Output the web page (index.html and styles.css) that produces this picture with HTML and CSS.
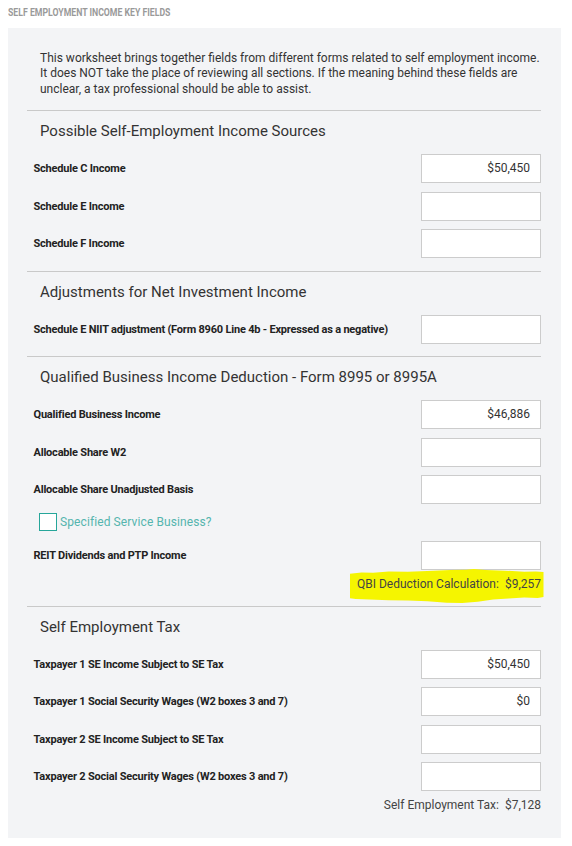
FILE: index.html
```html
<!DOCTYPE html>
<html lang="en">
<head>
<meta charset="utf-8">
<title>Self Employment Income Key Fields</title>
<link rel="stylesheet" href="styles.css">
</head>
<body>
<div class="page">
  <h1 class="page-title"><span>SELF EMPLOYMENT INCOME KEY FIELDS</span></h1>
  <div class="panel">
    <p class="intro">This worksheet brings together fields from different forms related to self employment income.<br>It does NOT take the place of reviewing all sections. If the meaning behind these fields are<br>unclear, a tax professional should be able to assist.</p>

    <section class="group">
      <h2 class="group-title">Possible Self-Employment Income Sources</h2>
      <div class="rows">
        <div class="row"><span class="label">Schedule C Income</span><div class="field">$50,450</div></div>
        <div class="row"><span class="label">Schedule E Income</span><div class="field"></div></div>
        <div class="row"><span class="label">Schedule F Income</span><div class="field"></div></div>
      </div>
    </section>

    <section class="group">
      <h2 class="group-title">Adjustments for Net Investment Income</h2>
      <div class="rows">
        <div class="row"><span class="label">Schedule E NIIT adjustment (Form 8960 Line 4b - Expressed as a negative)</span><div class="field"></div></div>
      </div>
    </section>

    <section class="group">
      <h2 class="group-title">Qualified Business Income Deduction - Form 8995 or 8995A</h2>
      <div class="rows">
        <div class="row"><span class="label">Qualified Business Income</span><div class="field">$46,886</div></div>
        <div class="row"><span class="label">Allocable Share W2</span><div class="field"></div></div>
        <div class="row"><span class="label">Allocable Share Unadjusted Basis</span><div class="field"></div></div>
        <label class="check-row"><span class="checkbox"></span><span class="check-label">Specified Service Business?</span></label>
        <div class="row"><span class="label">REIT Dividends and PTP Income</span><div class="field"></div></div>
      </div>
      <div class="summary"><span class="highlight">QBI Deduction Calculation:<span class="amount">$9,257</span></span></div>
    </section>

    <section class="group last">
      <h2 class="group-title">Self Employment Tax</h2>
      <div class="rows">
        <div class="row"><span class="label">Taxpayer 1 SE Income Subject to SE Tax</span><div class="field">$50,450</div></div>
        <div class="row"><span class="label">Taxpayer 1 Social Security Wages (W2 boxes 3 and 7)</span><div class="field">$0</div></div>
        <div class="row"><span class="label">Taxpayer 2 SE Income Subject to SE Tax</span><div class="field"></div></div>
        <div class="row"><span class="label">Taxpayer 2 Social Security Wages (W2 boxes 3 and 7)</span><div class="field"></div></div>
      </div>
      <div class="summary"><span>Self Employment Tax:<span class="amount">$7,128</span></span></div>
    </section>
  </div>
</div>
</body>
</html>
```

FILE: styles.css
```css
* { box-sizing: border-box; }

html, body {
  margin: 0;
  padding: 0;
  background: #ffffff;
}

body {
  font-family: Roboto, "Liberation Sans", Arial, sans-serif;
  color: #333333;
}

.page {
  padding: 0 8px;
}

.page-title {
  margin: 0 0 9px 0;
  padding-top: 6px;
  font-size: 10px;
  line-height: 13px;
  font-weight: 700;
  color: #9a9a9a;
  white-space: nowrap;
}

.page-title span {
  display: inline-block;
  transform: scaleX(0.87);
  transform-origin: left center;
}

.panel {
  width: 553px;
  background: #f3f4f6;
  padding: 22.5px 20px 23.5px 19px;
}

.intro {
  margin: 0 0 13px 0;
  padding: 0 0 0 13px;
  font-size: 12px;
  line-height: 15.5px;
  color: #333333;
  white-space: nowrap;
}

.group {
  border-top: 1px solid #c9c9c9;
  padding-bottom: 12.5px;
}

.group.last {
  padding-bottom: 0;
}

.group-title {
  margin: 10px 0 13px 0;
  padding-left: 13px;
  font-size: 15px;
  line-height: 20px;
  font-weight: 400;
  color: #333333;
}

.rows {
  display: flex;
  flex-direction: column;
  gap: 8.5px;
}

.row {
  display: flex;
  align-items: center;
  justify-content: space-between;
  padding-left: 6.5px;
  height: 29px;
}

.label {
  font-size: 11px;
  font-weight: 700;
  letter-spacing: -0.2px;
  color: #222222;
}

.field {
  width: 120px;
  height: 29px;
  background: #ffffff;
  border: 1px solid #cccccc;
  text-align: right;
  padding-right: 10px;
  font-size: 12px;
  line-height: 27px;
  color: #333333;
}

.check-row {
  display: flex;
  align-items: center;
  height: 20px;
  padding-left: 12px;
  margin-top: -1px;
  margin-bottom: 1px;
}

.checkbox {
  width: 18px;
  height: 18px;
  border: 1.5px solid #26a69a;
  background: #ffffff;
  margin-right: 3px;
}

.check-label {
  font-size: 12px;
  letter-spacing: 0.1px;
  color: #55b5ae;
}

.summary {
  margin-top: 5px;
  display: flex;
  justify-content: flex-end;
  font-size: 12px;
  line-height: 18px;
  color: #444444;
}

.amount {
  margin-left: 6px;
}

.highlight {
  position: relative;
  z-index: 0;
}

.highlight::before {
  content: "";
  position: absolute;
  z-index: -1;
  left: -7px;
  right: -2.5px;
  top: -6px;
  bottom: -10px;
  background: #f5f500;
  clip-path: polygon(
    0% 14%, 6% 10%, 12% 11%, 20% 7%, 30% 8%, 40% 6%, 52% 3%, 60% 2%, 64% 0%,
    70% 3%, 80% 5%, 90% 8%, 96% 7%, 100% 9%,
    100% 82%, 97% 85%, 90% 84%, 82% 87%, 74% 90%, 66% 96%, 58% 100%,
    50% 99%, 40% 95%, 30% 93%, 20% 92%, 10% 90%, 3% 88%, 0% 86%
  );
}
```
